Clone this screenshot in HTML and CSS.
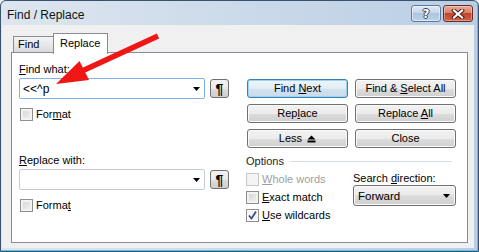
FILE: index.html
```html
<!DOCTYPE html>
<html lang="en">
<head>
    <meta charset="UTF-8">
    <meta name="viewport" content="width=device-width, initial-scale=1.0">
    <title>Find / Replace</title>
    <link rel="stylesheet" href="styles.css">
</head>
<body>
    <div class="window">
        <div class="titlebar">
            <span class="title">Find / Replace</span>
            <div class="caption-btns">
                <button class="cap help"><span>?</span></button>
                <button class="cap close">
                    <svg width="14" height="10" viewBox="0 0 14 10">
                        <path d="M3 1.5 L11 8.5 M11 1.5 L3 8.5" stroke="#4a1a12" stroke-width="4" stroke-linecap="square"/>
                        <path d="M3 1.5 L11 8.5 M11 1.5 L3 8.5" stroke="#fff" stroke-width="2.2" stroke-linecap="square"/>
                    </svg>
                </button>
            </div>
        </div>

        <div class="client">
            <div class="tabs">
                <div class="tab">Find</div>
                <div class="tab active">Replace</div>
            </div>

            <div class="panel">
                <div class="col-left">
                    <div class="field-label"><u>F</u>ind what:</div>
                    <div class="combo-row">
                        <div class="combo focused">
                            <span class="combo-text">&lt;&lt;^p</span>
                            <svg class="drop" width="7" height="4" viewBox="0 0 7 4"><path d="M0 0 H7 L3.5 4 Z" fill="#000"/></svg>
                        </div>
                        <button class="pilcrow">¶</button>
                    </div>
                    <div class="check"><span class="box"></span><span>For<u>m</u>at</span></div>

                    <div class="field-label replace-label"><u>R</u>eplace with:</div>
                    <div class="combo-row">
                        <div class="combo">
                            <span class="combo-text"></span>
                            <svg class="drop" width="7" height="4" viewBox="0 0 7 4"><path d="M0 0 H7 L3.5 4 Z" fill="#000"/></svg>
                        </div>
                        <button class="pilcrow">¶</button>
                    </div>
                    <div class="check"><span class="box"></span><span>Forma<u>t</u></span></div>
                </div>

                <div class="col-right">
                    <div class="btn-grid">
                        <button class="btn default">Find <u>N</u>ext</button>
                        <button class="btn">Find &amp; <u>S</u>elect All</button>
                        <button class="btn">Rep<u>l</u>ace</button>
                        <button class="btn">Replace <u>A</u>ll</button>
                        <button class="btn">Less
                            <svg class="less-icon" width="9" height="8" viewBox="0 0 9 8"><path d="M0.5 4.5 L4.5 0.5 L8.5 4.5 Z" fill="#000"/><rect x="0.5" y="5.5" width="8" height="2" fill="#000"/></svg>
                        </button>
                        <button class="btn">Close</button>
                    </div>

                    <div class="options-head">
                        <span>Options</span>
                        <span class="rule"></span>
                    </div>

                    <div class="options">
                        <div class="opt-checks">
                            <div class="check disabled"><span class="box"></span><span><u>W</u>hole words</span></div>
                            <div class="check"><span class="box"></span><span><u>E</u>xact match</span></div>
                            <div class="check"><span class="box checked">
                                <svg width="11" height="11" viewBox="0 0 11 11"><path d="M2 5.5 L4.5 8.5 L9 1.5" fill="none" stroke="#3b4f8f" stroke-width="1.8"/></svg>
                            </span><span><u>U</u>se wildcards</span></div>
                        </div>
                        <div class="direction">
                            <div class="dir-label">Search <u>d</u>irection:</div>
                            <div class="select">
                                <span>Forward</span>
                                <svg width="7" height="4" viewBox="0 0 7 4"><path d="M0 0 H7 L3.5 4 Z" fill="#000"/></svg>
                            </div>
                        </div>
                    </div>
                </div>
            </div>
        </div>

        <svg class="annot-arrow" width="479" height="252" viewBox="0 0 479 252">
            <line x1="82" y1="71" x2="158" y2="36" stroke="#ef1616" stroke-width="5.5"/>
            <polygon points="56,84 79.5,61 89,80" fill="#ef1616"/>
        </svg>
    </div>
</body>
</html>
```

FILE: styles.css
```css
body {
    margin: 0;
    font-family: "Liberation Sans", Arial, sans-serif;
    font-size: 11px;
    color: #000;
    background-color: #f0f0f0;
}
u {
    text-underline-offset: 1px;
}
.window {
    position: relative;
    width: 479px;
    height: 252px;
    box-sizing: border-box;
    border: 1px solid #3a5270;
    border-radius: 6px 6px 0 0;
    background: linear-gradient(to right, #dde6ef, #b9cee5);
    box-shadow: inset -1px -1px 0 #4fc8ef;
    display: flex;
    flex-direction: column;
    overflow: hidden;
}
.titlebar {
    height: 24px;
    display: flex;
    align-items: flex-start;
    justify-content: space-between;
    padding: 0 5px 0 6px;
    flex-shrink: 0;
}
.title {
    font-size: 12px;
    line-height: 14px;
    margin-top: 7px;
    color: #111;
}
.caption-btns {
    display: flex;
    gap: 2px;
    margin-top: 4px;
}
.cap {
    width: 30px;
    height: 17px;
    border-radius: 3px;
    padding: 0;
    display: flex;
    align-items: center;
    justify-content: center;
}
.help {
    border: 1px solid #60789a;
    background: linear-gradient(#dfe9f5, #c3d5ea 50%, #aec5df 50%, #bcd2ea);
    box-shadow: inset 0 0 0 1px rgba(255, 255, 255, 0.5);
}
.help span {
    font-family: "DejaVu Sans", sans-serif;
    font-weight: bold;
    font-size: 12px;
    line-height: 12px;
    color: #fff;
    text-shadow: 1px 0 0 #34465e, -1px 0 0 #34465e, 0 1px 0 #34465e, 0 -1px 0 #34465e;
}
.close {
    border: 1px solid #6b2a20;
    background: linear-gradient(#eaa898, #d77d68 50%, #c2432c 50%, #d0644a);
    box-shadow: inset 0 0 0 1px rgba(255, 255, 255, 0.35);
}
.client {
    flex: 1;
    margin: 0 4px 3px 1px;
    background-color: #f0f0f0;
    padding: 8px 6px 5px 9px;
    display: flex;
    flex-direction: column;
}
.tabs {
    display: flex;
    align-items: flex-start;
    height: 19px;
    padding-left: 2px;
}
.tab {
    box-sizing: border-box;
    border: 1px solid #898c95;
    border-bottom: none;
    line-height: 14px;
}
.tab:first-child {
    width: 41px;
    height: 16px;
    margin-top: 3px;
    padding-left: 4px;
    background: linear-gradient(#f3f3f3, #e9e9e9 50%, #dadada);
}
.tab.active {
    width: 55px;
    height: 21px;
    margin-left: -1px;
    padding: 2px 0 0 6px;
    background-color: #fff;
    position: relative;
    z-index: 1;
}
.panel {
    flex: 1;
    background-color: #fff;
    border: 1px solid #898c95;
    display: flex;
    gap: 17px;
    padding-left: 7px;
}
.col-left {
    width: 210px;
}
.field-label {
    line-height: 16px;
    margin-top: 8px;
}
.replace-label {
    margin-top: 31px;
}
.combo-row {
    display: flex;
    align-items: center;
    margin-top: 1px;
}
.combo {
    box-sizing: border-box;
    width: 186px;
    height: 21px;
    border: 1px solid #c5ccd6;
    border-radius: 2px;
    display: flex;
    align-items: center;
    justify-content: space-between;
    padding: 0 4px 0 3px;
    background-color: #fff;
}
.combo.focused {
    border-color: #7eb4ea;
}
.combo-text {
    font-size: 12px;
}
.pilcrow {
    box-sizing: border-box;
    width: 19px;
    height: 19px;
    margin-left: 5px;
    padding: 0;
    border: 1px solid #707070;
    border-radius: 3px;
    background: linear-gradient(#f2f2f2, #ebebeb 50%, #dddddd 50%, #cfcfcf);
    font-family: "Liberation Sans", Arial, sans-serif;
    font-weight: bold;
    font-size: 14px;
    line-height: 16px;
    color: #000;
}
.check {
    display: flex;
    align-items: center;
    gap: 3px;
    height: 14px;
    margin-top: 8px;
    padding-left: 1px;
}
.box {
    box-sizing: border-box;
    width: 13px;
    height: 13px;
    border: 1px solid #8e8f8f;
    background: linear-gradient(135deg, #cfd2d6, #f4f4f4);
    box-shadow: inset 0 0 0 2px #f2f2f2;
    display: flex;
    align-items: center;
    justify-content: center;
    flex-shrink: 0;
}
.box.checked {
    background: #f4f4f4;
    box-shadow: inset 0 0 0 1px #fff;
}
.check.disabled {
    color: #a0a0a0;
}
.check.disabled .box {
    border-color: #c7c7c7;
    background: #f4f4f4;
    box-shadow: none;
}
.col-right {
    width: 210px;
}
.btn-grid {
    display: grid;
    grid-template-columns: 101px 101px;
    grid-auto-rows: 19px;
    column-gap: 7px;
    row-gap: 6px;
    margin: 26px 0 0 1px;
}
.btn {
    box-sizing: border-box;
    padding: 0;
    border: 1px solid #707070;
    border-radius: 3px;
    background: linear-gradient(#f2f2f2, #ebebeb 50%, #dddddd 50%, #cfcfcf);
    box-shadow: inset 0 0 0 1px #fafafa;
    font-family: inherit;
    font-size: 11px;
    line-height: 15px;
    color: #000;
}
.btn.default {
    border-color: #3c7fb1;
    background: linear-gradient(#eef5fa, #e2ecf4 50%, #d3e2ee 50%, #c8dbea);
    box-shadow: inset 0 0 0 1px #9cd3f1;
}
.less-icon {
    margin-left: 2px;
    vertical-align: -1px;
}
.options-head {
    display: flex;
    align-items: center;
    gap: 6px;
    line-height: 14px;
    margin-top: 6px;
    color: #1e1e1e;
}
.rule {
    flex: 1;
    border-top: 1px solid #d5dfe5;
    margin-right: 4px;
}
.options {
    display: flex;
    margin-top: 2px;
}
.opt-checks {
    width: 107px;
}
.opt-checks .check {
    height: 18px;
    margin-top: 0;
    padding-left: 0;
}
.direction {
    margin-top: 2px;
}
.dir-label {
    line-height: 13px;
}
.select {
    box-sizing: border-box;
    width: 103px;
    height: 21px;
    border: 1px solid #707070;
    border-radius: 3px;
    background: linear-gradient(#f2f2f2, #ebebeb 50%, #dddddd 50%, #cfcfcf);
    box-shadow: inset 0 0 0 1px #fafafa;
    display: flex;
    align-items: center;
    justify-content: space-between;
    padding: 0 5px 0 4px;
    font-size: 11.5px;
}
.annot-arrow {
    position: absolute;
    left: -1px;
    top: -1px;
    pointer-events: none;
    z-index: 5;
}
```
